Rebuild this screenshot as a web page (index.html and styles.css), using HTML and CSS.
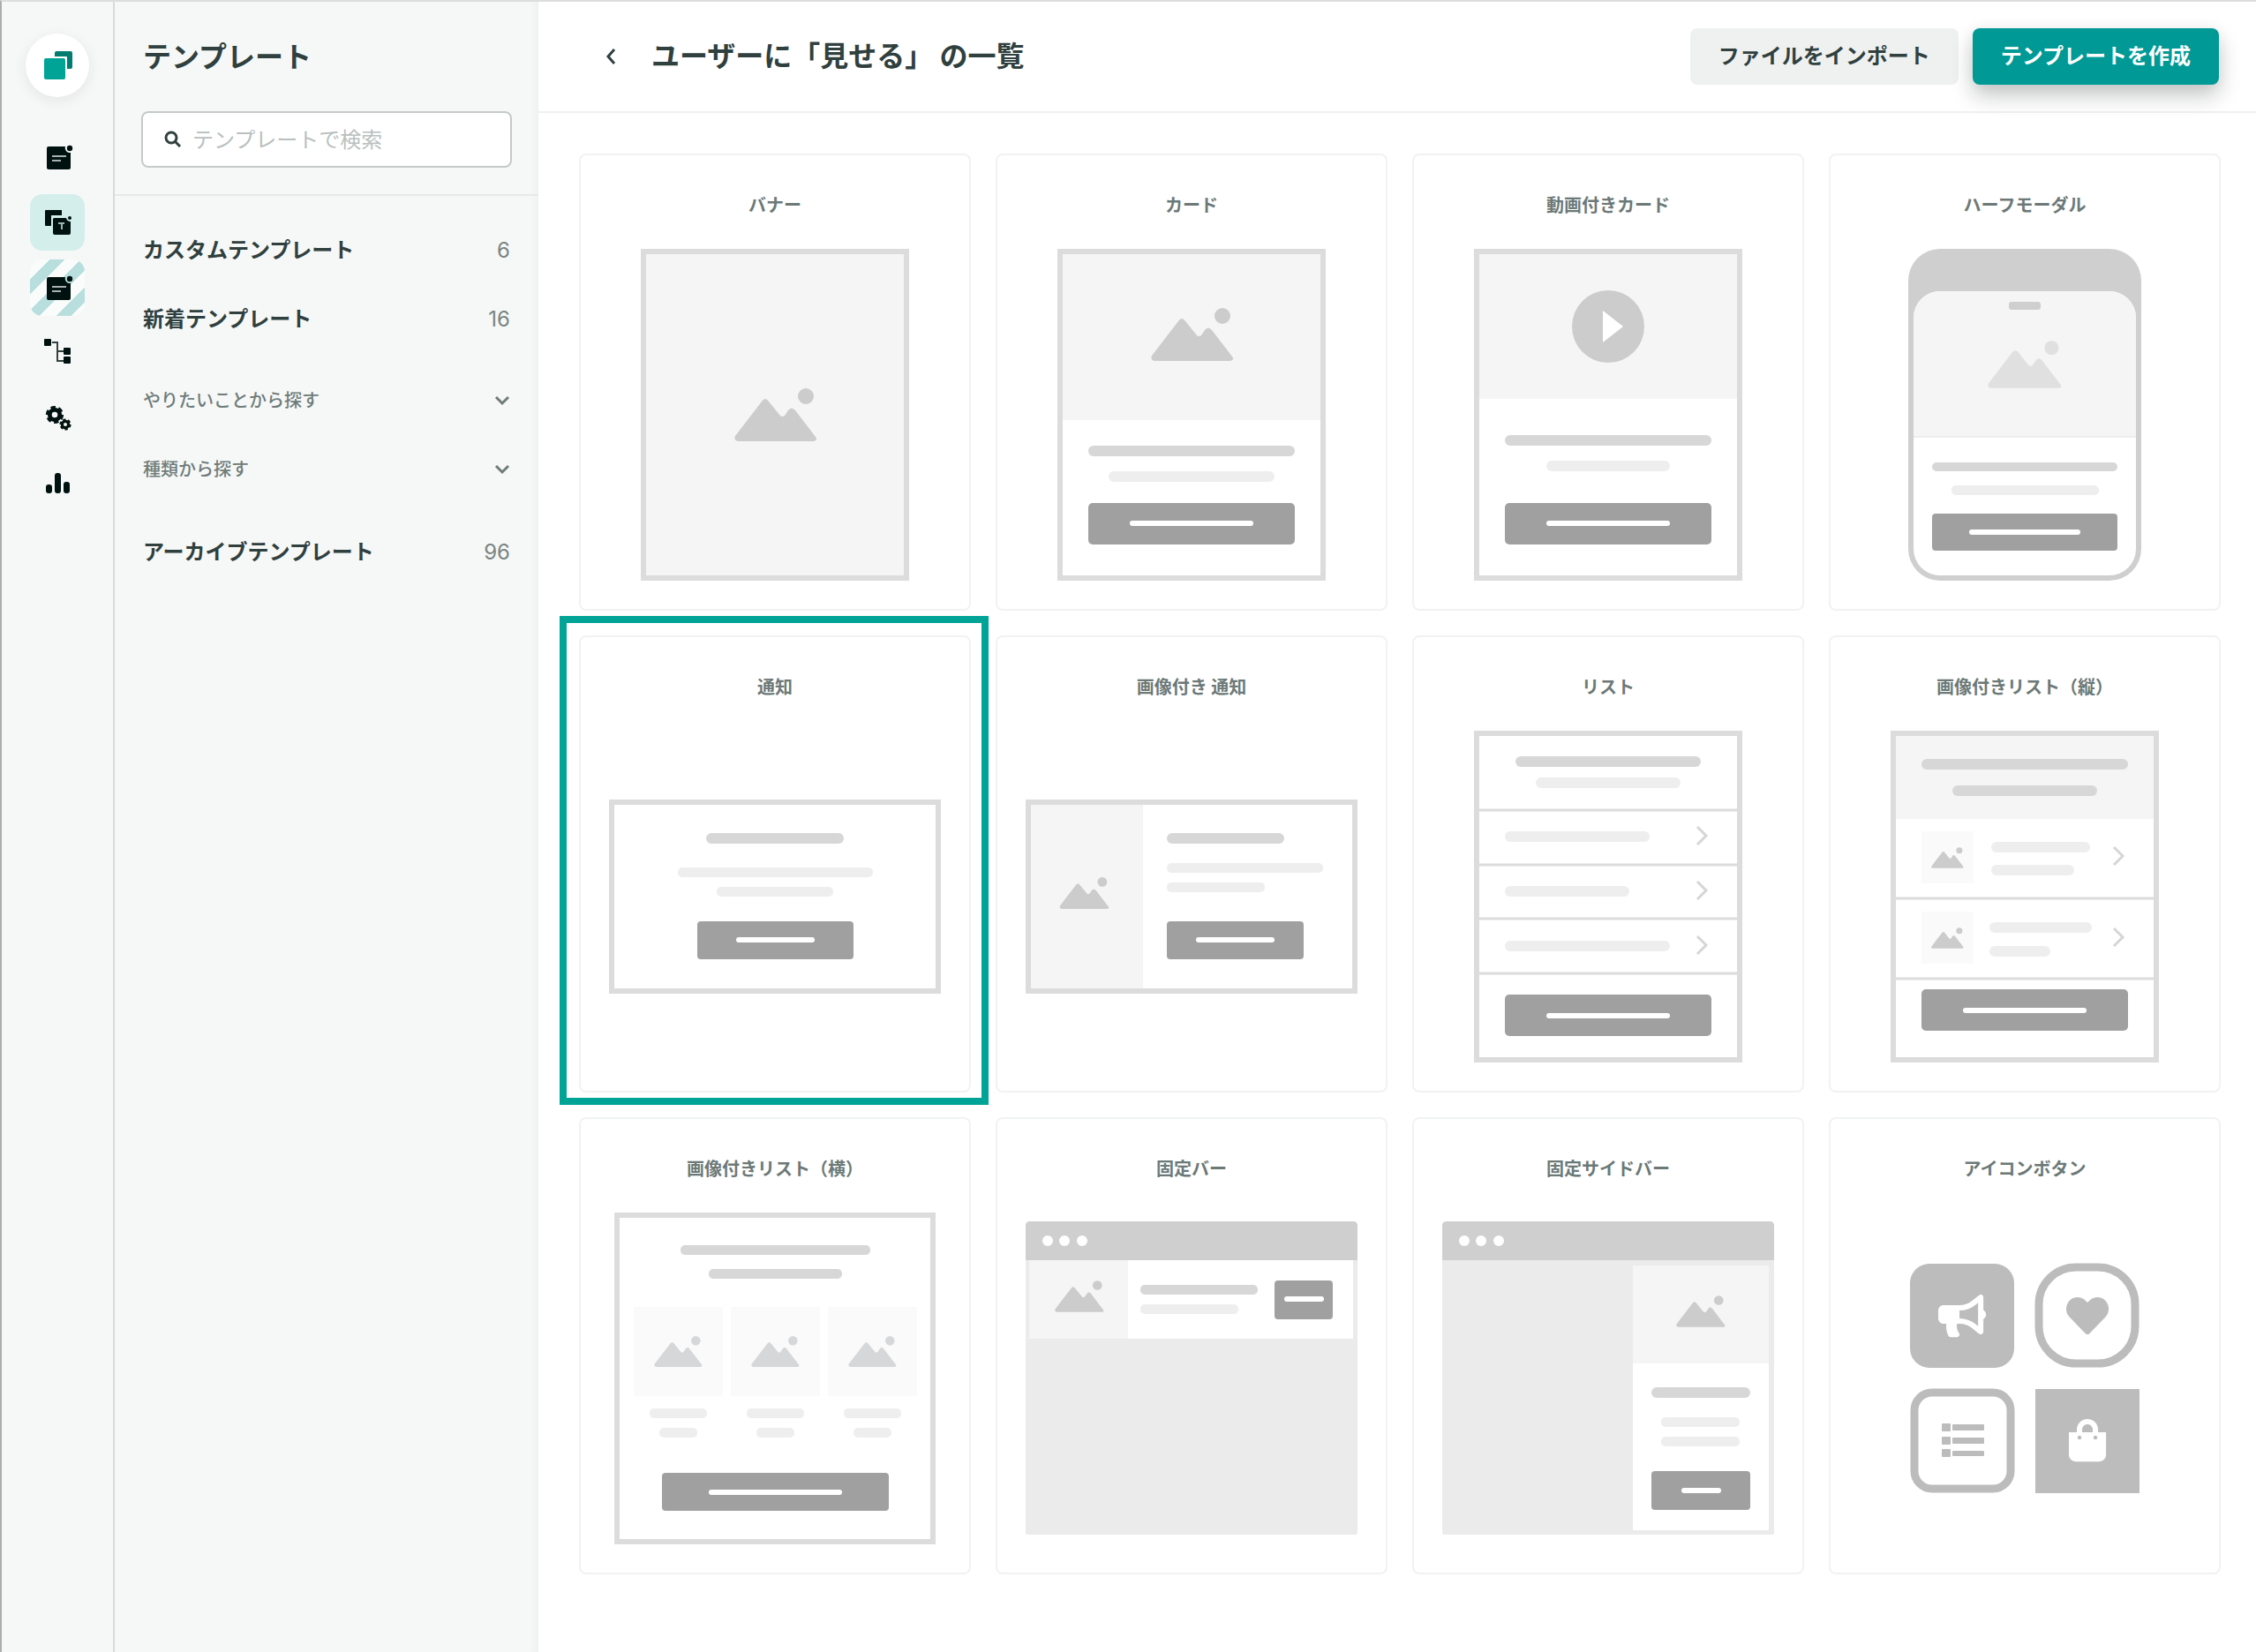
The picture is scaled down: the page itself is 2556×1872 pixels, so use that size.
FILE: index.html
```html
<!DOCTYPE html>
<html lang="ja">
<head>
<meta charset="utf-8">
<meta name="viewport" content="width=device-width, initial-scale=1">
<title>テンプレート</title>
<link rel="stylesheet" href="styles.css">
</head>
<body>
<svg class="defs" aria-hidden="true">
  <symbol id="photo" viewBox="0 0 94 60">
    <path d="M4 60Q-1 59 1 54L31 15Q35 9 39 15L52 31Q54 33 57 31L61 25Q65 20 69 25L92 55Q95 59 90 60Z"/>
    <circle cx="81" cy="9" r="9"/>
  </symbol>
  <symbol id="note" viewBox="0 0 32 32" overflow="visible">
    <path d="M6 4H25A5.500 5.500 0 0 0 31 11V28Q31 30 29 30H6Q4 30 4 28V6Q4 4 6 4Z"/>
    <path class="note-lines" d="M10 15H26M10 20H20"/>
    <circle cx="30" cy="6" r="3.200"/>
  </symbol>
</svg>

<nav class="rail" aria-label="メイン">
  <a class="logo" href="#" aria-label="ホーム">
    <svg width="32" height="32" viewBox="0 0 32 32"><rect class="logo-back" x="13" y="0" width="20" height="20" rx="2"/><rect class="logo-gap" x="1" y="6" width="26" height="26" rx="1"/><rect class="logo-front" x="1" y="8" width="24" height="24" rx="2"/></svg>
  </a>
  <a class="rail-item" href="#" aria-label="接客サービス"><svg viewBox="0 0 32 32"><use href="#note"/></svg></a>
  <a class="rail-item active" href="#" aria-label="テンプレート" aria-current="page">
    <svg viewBox="0 0 32 32"><path d="M3 2H21V8H9V20H3Q2 20 2 19V3Q2 2 3 2Z"/><path d="M12 11H26Q27 15 31 15V28Q31 30 29 30H13Q11 30 11 28V12Z"/><circle cx="30" cy="11" r="2"/><path class="mark" d="M17 17H24M21 17V24"/></svg>
  </a>
  <a class="rail-item striped" href="#" aria-label="接客サービス（新）"><svg viewBox="0 0 32 32"><use href="#note"/></svg></a>
  <a class="rail-item" href="#" aria-label="シナリオ">
    <svg viewBox="0 0 32 32"><rect x="1" y="0" width="8" height="8" rx="1"/><rect x="23" y="10" width="8" height="8" rx="1"/><rect x="23" y="20" width="8" height="8" rx="1"/><path class="wire" d="M10 4H16V25H23M16 14H23"/></svg>
  </a>
  <a class="rail-item" href="#" aria-label="設定">
    <svg viewBox="0 0 32 32"><circle class="cog" cx="13" cy="12" r="5.700" stroke-width="4.800"/><circle class="cog" cx="13" cy="12" r="8.500" stroke-width="3.200" pathLength="48" stroke-dasharray="4.800 3.200"/><circle class="cog" cx="25" cy="23" r="3.600" stroke-width="3.200"/><circle class="cog" cx="25" cy="23" r="5.400" stroke-width="2.400" pathLength="48" stroke-dasharray="4.800 3.200"/></svg>
  </a>
  <a class="rail-item" href="#" aria-label="分析">
    <svg viewBox="0 0 32 32"><rect x="3" y="17" width="7" height="10" rx="3"/><rect x="13" y="4" width="7" height="23" rx="3"/><rect x="23" y="14" width="7" height="13" rx="3"/></svg>
  </a>
</nav>

<aside class="sidebar">
  <div class="sidebar-head">
    <h2>テンプレート</h2>
    <label class="search">
      <svg viewBox="0 0 20 20" aria-hidden="true"><circle cx="8" cy="8" r="6"/><path d="M12 12L18 18"/></svg>
      <input type="text" placeholder="テンプレートで検索" aria-label="テンプレートで検索">
    </label>
  </div>
  <div class="menu">
    <ul>
      <li><a href="#"><span class="label">カスタムテンプレート</span><span class="count">6</span></a></li>
      <li><a href="#"><span class="label">新着テンプレート</span><span class="count">16</span></a></li>
    </ul>
    <ul>
      <li><button class="fold" type="button"><span class="label">やりたいことから探す</span><svg viewBox="0 0 18 12" aria-hidden="true"><path d="M2 2L9 9L16 2"/></svg></button></li>
      <li><button class="fold" type="button"><span class="label">種類から探す</span><svg viewBox="0 0 18 12" aria-hidden="true"><path d="M2 2L9 9L16 2"/></svg></button></li>
    </ul>
    <ul>
      <li><a href="#"><span class="label">アーカイブテンプレート</span><span class="count">96</span></a></li>
    </ul>
  </div>
</aside>

<main class="main">
  <header class="topbar">
    <button class="back" type="button" aria-label="戻る"><svg viewBox="0 0 12 20" aria-hidden="true"><path d="M10 2L3 10L10 18"/></svg></button>
    <h1>ユーザーに「見せる」 の一覧</h1>
    <button class="btn" type="button">ファイルをインポート</button>
    <button class="btn primary" type="button">テンプレートを作成</button>
  </header>

  <div class="grid">
    <a class="card" href="#">
      <h3>バナー</h3>
      <svg viewBox="0 0 376 376" aria-hidden="true">
        <rect class="frame tint" x="39" y="3" width="298" height="370"/>
        <use class="pic" href="#photo" x="142" y="158" width="94" height="60"/>
      </svg>
    </a>

    <a class="card" href="#">
      <h3>カード</h3>
      <svg viewBox="0 0 376 376" aria-hidden="true">
        <rect class="frame" x="39" y="3" width="298" height="370"/>
        <rect class="image" x="42" y="6" width="292" height="188"/>
        <use class="pic" href="#photo" x="142" y="67" width="94" height="60"/>
        <rect class="line" x="71" y="223" width="234" height="12" rx="6"/>
        <rect class="line soft" x="94" y="252" width="188" height="12" rx="6"/>
        <rect class="cta" x="71" y="288" width="234" height="47" rx="5"/>
        <rect class="white" x="118" y="308" width="140" height="6" rx="3"/>
      </svg>
    </a>

    <a class="card" href="#">
      <h3>動画付きカード</h3>
      <svg viewBox="0 0 376 376" aria-hidden="true">
        <rect class="frame" x="39" y="3" width="298" height="370"/>
        <rect class="image" x="42" y="6" width="292" height="164"/>
        <circle class="pic" cx="188" cy="88" r="41"/>
        <path class="white" d="M182 70L205 88L182 106Z"/>
        <rect class="line" x="71" y="211" width="234" height="12" rx="6"/>
        <rect class="line soft" x="118" y="240" width="140" height="12" rx="6"/>
        <rect class="cta" x="71" y="288" width="234" height="47" rx="5"/>
        <rect class="white" x="118" y="308" width="140" height="6" rx="3"/>
      </svg>
    </a>

    <a class="card" href="#">
      <h3>ハーフモーダル</h3>
      <svg viewBox="0 0 376 376" aria-hidden="true">
        <rect class="chrome" x="56" y="0" width="264" height="376" rx="36"/>
        <rect class="white" x="62" y="48" width="252" height="322" rx="30"/>
        <path class="image" d="M62 213V78A30 30 0 0 1 92 48H284A30 30 0 0 1 314 78V213Z"/>
        <rect class="edge" x="62" y="212" width="252" height="2"/>
        <rect class="chrome" x="170" y="60" width="36" height="9" rx="3"/>
        <use class="pic light" href="#photo" x="146" y="104" width="84" height="54"/>
        <rect class="line" x="83" y="242" width="210" height="10" rx="5"/>
        <rect class="line soft" x="105" y="268" width="167" height="11" rx="5"/>
        <rect class="cta" x="83" y="300" width="210" height="42" rx="4"/>
        <rect class="white" x="125" y="318" width="126" height="6" rx="3"/>
      </svg>
    </a>

    <a class="card selected" href="#" aria-current="true">
      <h3>通知</h3>
      <svg viewBox="0 0 376 376" aria-hidden="true">
        <rect class="frame" x="3" y="81" width="370" height="214"/>
        <rect class="line" x="110" y="116" width="156" height="12" rx="6"/>
        <rect class="line soft" x="78" y="155" width="221" height="11" rx="5"/>
        <rect class="line soft" x="122" y="177" width="132" height="11" rx="5"/>
        <rect class="cta" x="100" y="216" width="177" height="43" rx="4"/>
        <rect class="white" x="144" y="234" width="89" height="6" rx="3"/>
      </svg>
    </a>

    <a class="card" href="#">
      <h3>画像付き 通知</h3>
      <svg viewBox="0 0 376 376" aria-hidden="true">
        <rect class="frame" x="3" y="81" width="370" height="214"/>
        <rect class="image" x="6" y="84" width="127" height="208"/>
        <use class="pic" href="#photo" x="38" y="166" width="57" height="36"/>
        <rect class="line" x="160" y="116" width="133" height="12" rx="6"/>
        <rect class="line soft" x="160" y="150" width="177" height="11" rx="5"/>
        <rect class="line soft" x="160" y="172" width="111" height="11" rx="5"/>
        <rect class="cta" x="160" y="216" width="155" height="43" rx="4"/>
        <rect class="white" x="193" y="234" width="89" height="6" rx="3"/>
      </svg>
    </a>

    <a class="card" href="#">
      <h3>リスト</h3>
      <svg viewBox="0 0 376 376" aria-hidden="true">
        <rect class="frame" x="39" y="3" width="298" height="370"/>
        <rect class="line" x="83" y="29" width="210" height="12" rx="6"/>
        <rect class="line soft" x="106" y="53" width="164" height="12" rx="6"/>
        <path class="rule" d="M42 90H334M42 152H334M42 213H334M42 275H334"/>
        <rect class="line soft" x="71" y="114" width="164" height="12" rx="6"/>
        <rect class="line soft" x="71" y="176" width="141" height="12" rx="6"/>
        <rect class="line soft" x="71" y="238" width="187" height="12" rx="6"/>
        <path class="arrow" d="M289 109L299 119L289 129M289 171L299 181L289 191M289 233L299 243L289 253"/>
        <rect class="cta" x="71" y="299" width="234" height="47" rx="5"/>
        <rect class="white" x="118" y="320" width="140" height="6" rx="3"/>
      </svg>
    </a>

    <a class="card" href="#">
      <h3>画像付きリスト（縦）</h3>
      <svg viewBox="0 0 376 376" aria-hidden="true">
        <rect class="frame" x="39" y="3" width="298" height="370"/>
        <rect class="image" x="42" y="6" width="292" height="94"/>
        <rect class="line" x="71" y="32" width="234" height="12" rx="6"/>
        <rect class="line" x="106" y="62" width="164" height="12" rx="6"/>
        <rect class="thumb" x="71" y="114" width="59" height="59"/>
        <use class="pic" href="#photo" x="82" y="132" width="37" height="24"/>
        <rect class="line soft" x="150" y="126" width="112" height="12" rx="6"/>
        <rect class="line soft" x="150" y="152" width="94" height="12" rx="6"/>
        <path class="rule" d="M42 190H334M42 281H334"/>
        <rect class="thumb" x="71" y="205" width="59" height="59"/>
        <use class="pic" href="#photo" x="82" y="223" width="37" height="24"/>
        <rect class="line soft" x="148" y="217" width="116" height="12" rx="6"/>
        <rect class="line soft" x="148" y="244" width="69" height="12" rx="6"/>
        <path class="arrow" d="M289 132L299 142L289 152M289 224L299 234L289 244"/>
        <rect class="cta" x="71" y="293" width="234" height="47" rx="5"/>
        <rect class="white" x="118" y="314" width="140" height="6" rx="3"/>
      </svg>
    </a>

    <a class="card" href="#">
      <h3>画像付きリスト（横）</h3>
      <svg viewBox="0 0 376 376" aria-hidden="true">
        <rect class="frame" x="9" y="3" width="358" height="370"/>
        <rect class="line" x="81" y="37" width="215" height="11" rx="5"/>
        <rect class="line" x="113" y="64" width="151" height="11" rx="5"/>
        <g id="column">
          <rect class="thumb" x="28" y="107" width="101" height="101"/>
          <use class="pic cool" href="#photo" x="51" y="140" width="55" height="35"/>
          <rect class="line soft" x="46" y="222" width="65" height="11" rx="5"/>
          <rect class="line soft" x="57" y="244" width="43" height="11" rx="5"/>
        </g>
        <use href="#column" x="110"/>
        <use href="#column" x="220"/>
        <rect class="cta" x="60" y="295" width="257" height="43" rx="4"/>
        <rect class="white" x="113" y="314" width="151" height="6" rx="3"/>
      </svg>
    </a>

    <a class="card" href="#">
      <h3>固定バー</h3>
      <svg viewBox="0 0 376 376" aria-hidden="true">
        <rect class="page" x="0" y="20" width="376" height="345" rx="2"/>
        <path class="chrome" d="M0 54V15Q0 10 5 10H371Q376 10 376 15V54Z"/>
        <circle class="white" cx="25" cy="32" r="6"/><circle class="white" cx="44" cy="32" r="6"/><circle class="white" cx="64" cy="32" r="6"/>
        <rect class="white" x="4" y="54" width="367" height="89"/>
        <rect class="image" x="4" y="54" width="112" height="89"/>
        <use class="pic" href="#photo" x="33" y="77" width="56" height="36"/>
        <rect class="line" x="130" y="82" width="133" height="11" rx="5"/>
        <rect class="line soft" x="130" y="104" width="111" height="11" rx="5"/>
        <rect class="cta" x="282" y="77" width="66" height="44" rx="4"/>
        <rect class="white" x="293" y="95" width="45" height="6" rx="3"/>
      </svg>
    </a>

    <a class="card" href="#">
      <h3>固定サイドバー</h3>
      <svg viewBox="0 0 376 376" aria-hidden="true">
        <rect class="page" x="0" y="20" width="376" height="345" rx="2"/>
        <path class="chrome" d="M0 54V15Q0 10 5 10H371Q376 10 376 15V54Z"/>
        <circle class="white" cx="25" cy="32" r="6"/><circle class="white" cx="44" cy="32" r="6"/><circle class="white" cx="64" cy="32" r="6"/>
        <rect class="white" x="216" y="60" width="154" height="300"/>
        <rect class="image" x="216" y="60" width="154" height="111"/>
        <use class="pic" href="#photo" x="265" y="94" width="56" height="36"/>
        <rect class="line" x="237" y="198" width="112" height="12" rx="6"/>
        <rect class="line soft" x="248" y="232" width="89" height="11" rx="5"/>
        <rect class="line soft" x="248" y="254" width="89" height="11" rx="5"/>
        <rect class="cta" x="237" y="293" width="112" height="44" rx="4"/>
        <rect class="white" x="271" y="312" width="45" height="6" rx="3"/>
      </svg>
    </a>

    <a class="card" href="#">
      <h3>アイコンボタン</h3>
      <svg viewBox="0 0 376 376" aria-hidden="true">
        <rect class="tile" x="58" y="58" width="118" height="118" rx="22"/>
        <path class="white" transform="translate(90 93) scale(.094)" d="M576 240c0-23.630-12.950-44.040-32-55.120V32.010C544 23.260 537.020 0 512 0c-7.120 0-14.190 2.380-19.980 7.020l-85.030 68.030C364.280 109.190 310.660 128 256 128H64c-35.350 0-64 28.650-64 64v96c0 35.350 28.650 64 64 64h33.700c-1.390 10.480-2.180 21.140-2.180 32 0 39.770 9.260 77.350 25.560 110.940 5.190 10.690 16.520 17.060 28.400 17.060h74.280c26.050 0 41.690-29.840 25.900-50.560-16.400-21.520-26.150-48.360-26.150-77.440 0-11.110 1.620-21.790 4.410-32H256c54.660 0 108.280 18.810 150.980 52.950l85.030 68.030a32.023 32.023 0 0 0 19.980 7.020c24.920 0 32-22.780 32-32V295.130C563.050 284.040 576 263.630 576 240zm-96 141.420l-33.050-26.440C392.950 311.780 325.120 288 256 288v-96c69.120 0 136.950-23.780 190.950-66.980L480 98.580v282.840z"/>
        <rect class="tile hollow" x="204" y="62" width="109" height="109" rx="42"/>
        <path class="tile" transform="translate(235 93) scale(.094)" d="M462.300 62.600C407.500 15.900 326 24.300 275.700 76.200L256 96.500l-19.700-20.300C186.100 24.300 104.500 15.900 49.700 62.600c-62.800 53.600-66.100 149.800-9.900 207.900l193.500 199.800c12.500 12.900 32.800 12.900 45.300 0l193.500-199.800c56.300-58.100 53-154.300-9.800-207.900z"/>
        <rect class="tile hollow" x="63" y="204" width="109" height="109" rx="20"/>
        <g class="tile">
          <rect x="94" y="239" width="10" height="9" rx="1"/><rect x="106" y="240" width="36" height="7" rx="1"/>
          <rect x="94" y="254" width="10" height="9" rx="1"/><rect x="106" y="255" width="36" height="7" rx="1"/>
          <rect x="94" y="268" width="10" height="9" rx="1"/><rect x="106" y="270" width="36" height="6" rx="1"/>
        </g>
        <rect class="tile" x="200" y="200" width="118" height="118"/>
        <path class="white" transform="translate(238 234) scale(.094)" d="M352 160v-32C352 57.420 294.579 0 224 0 153.420 0 96 57.420 96 128v32H0v272c0 44.183 35.817 80 80 80h288c44.183 0 80-35.817 80-80V160h-96zm-192-32c0-35.290 28.710-64 64-64s64 28.710 64 64v32H160v-32zm160 120c-13.255 0-24-10.745-24-24s10.745-24 24-24 24 10.745 24 24-10.745 24-24 24zm-192 0c-13.255 0-24-10.745-24-24s10.745-24 24-24 24 10.745 24 24-10.745 24-24 24z"/>
      </svg>
    </a>
  </div>
</main>
</body>
</html>
```
FILE: styles.css
```css
* {
  box-sizing: border-box;
}

body {
  margin: 0;
  min-height: 100vh;
  display: flex;
  border-top: 2px solid #dddddd;
  border-left: 2px solid #adadad;
  background: #ffffff;
  color: #30403e;
  font-family: "Noto Sans CJK JP", sans-serif;
  font-size: 24px;
}

h1, h2, h3, ul {
  margin: 0;
  padding: 0;
}

ul {
  list-style: none;
}

a {
  color: inherit;
  text-decoration: none;
}

button, input {
  margin: 0;
  padding: 0;
  border: 0;
  background: none;
  color: inherit;
  font: inherit;
}

button {
  cursor: pointer;
}

svg {
  display: block;
  flex: none;
}

.defs {
  position: absolute;
  width: 0;
  height: 0;
}

/* Icon rail */
.rail {
  width: 128px;
  flex: none;
  display: flex;
  flex-direction: column;
  align-items: center;
  gap: 10px;
  padding-top: 36px;
  border-right: 2px solid #d7dad9;
  background: #f6f8f7;
}

.logo {
  width: 72px;
  height: 72px;
  display: grid;
  place-items: center;
  margin-bottom: 26px;
  border-radius: 50%;
  background: #ffffff;
  box-shadow: 0 4px 16px rgba(0, 20, 16, 0.08);
}

.logo svg { overflow: visible; }
.logo-back { fill: #007d70; }
.logo-front { fill: #00a497; }
.logo-gap { fill: #ffffff; }

.rail-item {
  width: 62px;
  height: 64px;
  display: grid;
  place-items: center;
  border-radius: 14px;
}

.rail-item svg {
  width: 32px;
  height: 32px;
  fill: #00120f;
  overflow: visible;
}

.rail-item.active {
  background: #d4eeec;
}

.rail-item.striped {
  background: repeating-linear-gradient(135deg, #b8dfde 0 3px, #fafcfb 3px 16px, #b8dfde 16px 25px);
}

.note-lines, .mark, .wire {
  fill: none;
  stroke: #a9b1b0;
  stroke-width: 2;
}

.mark { stroke: #9cb5b2; }
.wire { stroke: #33413f; }

.cog {
  fill: none;
  stroke: #00120f;
}

/* Sidebar */
.sidebar {
  width: 480px;
  flex: none;
  background: #f6f8f7;
  box-shadow: inset -14px 0 14px -14px rgba(0, 20, 16, 0.06);
}

.sidebar-head {
  padding: 36px 30px 30px;
  border-bottom: 2px solid #e6e9e8;
}

.sidebar h2 {
  margin-bottom: 40px;
  padding-left: 2px;
  font-size: 32px;
  line-height: 48px;
  font-weight: 700;
}

.search {
  height: 64px;
  display: flex;
  align-items: center;
  gap: 12px;
  padding: 0 24px;
  border: 2px solid #c5cac9;
  border-radius: 8px;
  background: #ffffff;
}

.search svg {
  width: 20px;
  height: 20px;
  fill: none;
  stroke: #30403e;
  stroke-width: 3;
}

.search input {
  flex: 1;
  min-width: 0;
  padding-bottom: 3px;
  outline: 0;
  font-size: 24px;
}

.search input::placeholder {
  color: #b9bfbe;
  opacity: 1;
}

.menu {
  display: grid;
  gap: 45px;
  padding: 37px 32px;
}

.menu ul {
  display: grid;
  gap: 30px;
}

.menu a, .fold {
  width: 100%;
  height: 48px;
  display: flex;
  align-items: center;
  justify-content: space-between;
  font-weight: 700;
}

.label {
  padding-bottom: 3px;
}

.count {
  color: #7a8583;
  font-family: Inter, sans-serif;
  font-weight: 400;
}

.fold {
  color: #6f7c7a;
  font-size: 20px;
  font-weight: 500;
}

.fold svg {
  width: 18px;
  height: 12px;
  fill: none;
  stroke: #6f7c7a;
  stroke-width: 3;
}

/* Main column */
.main {
  flex: 1;
  min-width: 0;
}

.topbar {
  height: 126px;
  display: flex;
  align-items: center;
  gap: 10px;
  padding: 0 42px 0 46px;
  border-bottom: 2px solid #eff1f0;
}

.back {
  width: 72px;
  height: 64px;
  display: grid;
  place-items: center;
}

.back svg {
  width: 12px;
  height: 20px;
  fill: none;
  stroke: #30403e;
  stroke-width: 3;
}

.topbar h1 {
  flex: 1;
  padding-bottom: 6px;
  font-size: 32px;
  line-height: 48px;
  font-weight: 700;
}

.btn {
  height: 64px;
  padding: 0 32px 6px;
  border-radius: 8px;
  background: #eff1f0;
  font-size: 24px;
  font-weight: 700;
}

.btn.primary {
  margin-left: 6px;
  background: #009996;
  color: #ffffff;
  box-shadow: 0 12px 24px rgba(0, 18, 15, 0.24), 0 0 16px rgba(0, 18, 15, 0.04);
}

.grid {
  display: grid;
  grid-template-columns: repeat(4, 1fr);
  gap: 28px;
  padding: 46px 40px 46px 46px;
}

.card {
  position: relative;
  padding: 34px 32px 32px;
  border: 2px solid #f1f2f2;
  border-radius: 8px;
}

.card h3 {
  margin-bottom: 28px;
  color: #6c7977;
  font-size: 20px;
  line-height: 44px;
  font-weight: 700;
  text-align: center;
}

.card svg {
  width: 100%;
}

.card.selected::after {
  content: "";
  position: absolute;
  inset: -24px -22px -16px -24px;
  border: 8px solid #00a497;
  pointer-events: none;
}

/* Wireframe previews */
.frame { fill: #ffffff; stroke: #dcdcdc; stroke-width: 6; }
.frame.tint { fill: #f5f5f5; }
.image { fill: #f5f5f5; }
.thumb { fill: #fafafa; }
.edge { fill: #ededed; }
.pic { fill: #cccccc; }
.pic.light { fill: #e0e0e0; }
.pic.cool { fill: #d6d7d8; }
.line { fill: #d7d7d7; }
.line.soft { fill: #eeeeee; }
.cta { fill: #a0a0a0; }
.white { fill: #ffffff; }
.chrome { fill: #cfcfcf; }
.page { fill: #ebebeb; }
.tile { fill: #bcbcbc; }
.tile.hollow { fill: none; stroke: #bcbcbc; stroke-width: 9; }
.rule { fill: none; stroke: #dcdcdc; stroke-width: 3; }
.arrow { fill: none; stroke: #d6d6d6; stroke-width: 3; }
```
